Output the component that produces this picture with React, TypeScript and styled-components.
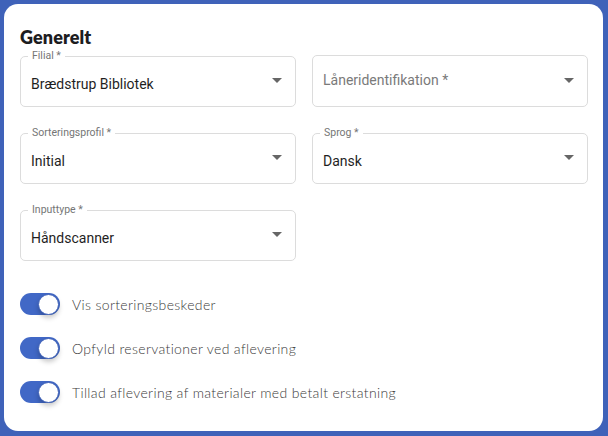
import styled, { createGlobalStyle } from "styled-components";

const GlobalStyle = createGlobalStyle`
  html, body {
    margin: 0;
    padding: 0;
    background: #3f62b9;
  }
  body {
    font-family: Roboto, "Liberation Sans", sans-serif;
  }
`;

const Page = styled.div`
  width: 608px;
  height: 436px;
  padding: 4px 5px 5px 4px;
  box-sizing: border-box;
  background: #3f62b9;
`;

const Card = styled.div`
  height: 100%;
  box-sizing: border-box;
  background: #fff;
  border-radius: 14px;
  padding: 23px 16px 0 16px;
  display: flex;
  flex-direction: column;
`;

const Title = styled.h2`
  margin: 0;
  font-family: Lato, "Open Sans", sans-serif;
  font-weight: 800;
  font-size: 18px;
  line-height: 20px;
  color: #1d1d1f;
  letter-spacing: 0.1px;
`;

const Grid = styled.div`
  display: grid;
  grid-template-columns: 276px 276px;
  column-gap: 16px;
  row-gap: 25px;
  margin-top: 8px;
`;

const Field = styled.div<{ $hasValue: boolean }>`
  position: relative;
  height: ${(p) => (p.$hasValue ? "51px" : "52px")};
  box-sizing: border-box;
  border: 1px solid #dcdcdc;
  border-radius: 5px;
  display: flex;
  align-items: center;
  padding: 0 13px 0 10px;
  margin-top: ${(p) => (p.$hasValue ? "1px" : "0")};
`;

const Legend = styled.span`
  position: absolute;
  top: -7px;
  left: 7px;
  padding: 0 4px;
  background: #fff;
  font-size: 10.5px;
  line-height: 12px;
  color: #757575;
`;

const Value = styled.span<{ $placeholder?: boolean }>`
  flex: 1;
  font-size: 14px;
  color: ${(p) => (p.$placeholder ? "#7a7a7a" : "#1f1f1f")};
  margin-top: ${(p) => (p.$placeholder ? "-2px" : "4px")};
`;

const Caret = styled.span`
  width: 0;
  height: 0;
  border-left: 5px solid transparent;
  border-right: 5px solid transparent;
  border-top: 5px solid #666;
  margin-top: -2px;
`;

const Toggles = styled.div`
  display: flex;
  flex-direction: column;
  gap: 22px;
  margin-top: 32px;
`;

const ToggleRow = styled.label`
  display: flex;
  align-items: center;
  gap: 12px;
`;

const Track = styled.span<{ $on: boolean }>`
  position: relative;
  width: 40px;
  height: 22px;
  border-radius: 11px;
  background: ${(p) => (p.$on ? "#4168c6" : "#bbb")};
  flex-shrink: 0;
`;

const Thumb = styled.span<{ $on: boolean }>`
  position: absolute;
  top: 0.5px;
  left: ${(p) => (p.$on ? "18px" : "0")};
  width: 21px;
  height: 21px;
  border-radius: 50%;
  background: #fff;
  box-sizing: border-box;
  border: 1px solid #3f62b9;
  box-shadow: 0 3px 5px rgba(0, 0, 0, 0.22);
`;

const ToggleLabel = styled.span`
  font-family: Lato, "Open Sans", sans-serif;
  font-size: 14px;
  font-weight: 300;
  color: #3a3a3a;
  letter-spacing: 0.35px;
`;

type SelectProps = { label: string; value?: string };

const Select = ({ label, value }: SelectProps) => (
  <Field $hasValue={!!value}>
    {value ? (
      <>
        <Legend>{label}</Legend>
        <Value>{value}</Value>
      </>
    ) : (
      <Value $placeholder>{label}</Value>
    )}
    <Caret />
  </Field>
);

const toggles = [
  "Vis sorteringsbeskeder",
  "Opfyld reservationer ved aflevering",
  "Tillad aflevering af materialer med betalt erstatning",
];

const App = () => (
  <>
    <GlobalStyle />
    <Page>
      <Card>
        <Title>Generelt</Title>
        <Grid>
          <Select label="Filial *" value="Brædstrup Bibliotek" />
          <Select label="Låneridentifikation *" />
          <Select label="Sorteringsprofil *" value="Initial" />
          <Select label="Sprog *" value="Dansk" />
          <Select label="Inputtype *" value="Håndscanner" />
        </Grid>
        <Toggles>
          {toggles.map((t) => (
            <ToggleRow key={t}>
              <Track $on>
                <Thumb $on />
              </Track>
              <ToggleLabel>{t}</ToggleLabel>
            </ToggleRow>
          ))}
        </Toggles>
      </Card>
    </Page>
  </>
);

export default App;
